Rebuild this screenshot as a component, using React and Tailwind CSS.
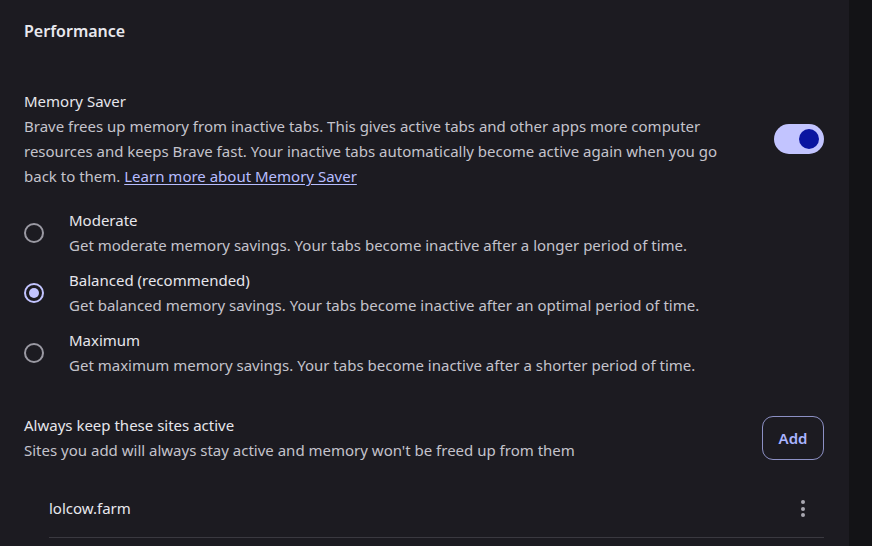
import React, { useState } from 'react';

const options = [
  { id: 'moderate', label: 'Moderate', desc: 'Get moderate memory savings. Your tabs become inactive after a longer period of time.' },
  { id: 'balanced', label: 'Balanced (recommended)', desc: 'Get balanced memory savings. Your tabs become inactive after an optimal period of time.' },
  { id: 'maximum', label: 'Maximum', desc: 'Get maximum memory savings. Your tabs become inactive after a shorter period of time.' },
];

export default function App() {
  const [enabled, setEnabled] = useState(true);
  const [mode, setMode] = useState('balanced');

  return (
    <div className="flex h-[546px] w-[872px] overflow-hidden bg-[#131316] font-['Noto_Sans',sans-serif] text-[15px]">
      {/* Main panel */}
      <div className="w-[849px] shrink-0 bg-[#1c1b21] pl-6 pr-[25px]">
        <h1 className="pt-[19px] text-[16px] font-semibold leading-6 text-[#e8e8ee]">Performance</h1>

        {/* Memory Saver */}
        <div className="mt-[46px] flex items-center justify-between">
          <div className="w-[716px]">
            <p className="leading-[25px] text-[#e6e6ec]">Memory Saver</p>
            <p className="leading-[25px] text-[#c4c3cc]">
              Brave frees up memory from inactive tabs. This gives active tabs and other apps more computer resources and keeps Brave fast. Your inactive tabs automatically become active again when you go back to them.{' '}
              <a href="#" className="text-[#b7bdff] underline underline-offset-2">Learn more about Memory Saver</a>
            </p>
          </div>
          <button
            onClick={() => setEnabled(!enabled)}
            className={`flex h-[30px] w-[50px] items-center rounded-full px-[5px] ${enabled ? 'justify-end bg-[#c2c4ff]' : 'justify-start bg-[#46464e]'}`}
          >
            <span className={`h-5 w-5 rounded-full ${enabled ? 'bg-[#0a15a0]' : 'bg-[#9a9aa2]'}`} />
          </button>
        </div>

        {/* Options */}
        <div className="mt-[19px] flex flex-col gap-[10px]">
          {options.map((o) => (
            <label key={o.id} className="flex cursor-pointer items-center" onClick={() => setMode(o.id)}>
              <span className="flex w-[45px] shrink-0 justify-start">
                <span
                  className={`flex h-5 w-5 items-center justify-center rounded-full border-2 ${mode === o.id ? 'border-[#c2c4ff]' : 'border-[#9a99a2]'}`}
                >
                  {mode === o.id && <span className="h-[10px] w-[10px] rounded-full bg-[#c2c4ff]" />}
                </span>
              </span>
              <span>
                <span className="block leading-[25px] text-[#e6e6ec]">{o.label}</span>
                <span className="block leading-[25px] text-[#c4c3cc]">{o.desc}</span>
              </span>
            </label>
          ))}
        </div>

        {/* Always active sites */}
        <div className="mt-[35px] flex items-center justify-between">
          <div>
            <p className="leading-[25px] text-[#e6e6ec]">Always keep these sites active</p>
            <p className="leading-[25px] text-[#c4c3cc]">Sites you add will always stay active and memory won't be freed up from them</p>
          </div>
          <button className="h-[44px] w-[62px] rounded-[11px] border border-[#8c90c4] text-[15px] font-semibold text-[#aab4ff]">
            Add
          </button>
        </div>

        <div className="ml-[25px] mt-[17px] flex h-[58px] items-center justify-between border-b border-[#3a3940]">
          <span className="text-[#e8e8ee]">lolcow.farm</span>
          <span className="mr-[19px] flex flex-col gap-[2.5px]">
            <span className="h-[4px] w-[4px] rounded-full bg-[#a8a7b0]" />
            <span className="h-[4px] w-[4px] rounded-full bg-[#a8a7b0]" />
            <span className="h-[4px] w-[4px] rounded-full bg-[#a8a7b0]" />
          </span>
        </div>
      </div>
    </div>
  );
}
